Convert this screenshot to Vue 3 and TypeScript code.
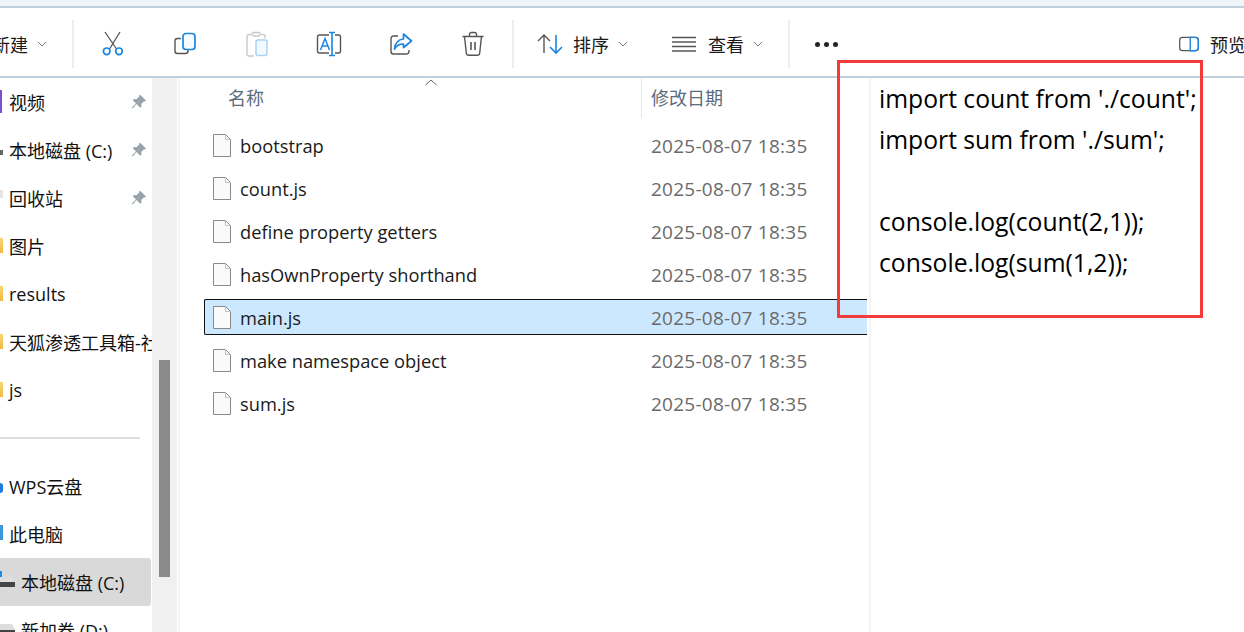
<script setup lang="ts">
const sideTop = [
  { name: '视频', pin: true, kind: 'video' },
  { name: '本地磁盘 (C:)', pin: true, kind: 'disk' },
  { name: '回收站', pin: true, kind: 'bin' },
  { name: '图片', pin: false, kind: 'folder' },
  { name: 'results', pin: false, kind: 'folder' },
  { name: '天狐渗透工具箱-社区版', pin: false, kind: 'folder' },
  { name: 'js', pin: false, kind: 'folder' },
]
const files = ['bootstrap', 'count.js', 'define property getters', 'hasOwnProperty shorthand', 'main.js', 'make namespace object', 'sum.js']
const code = ["import count from './count';", "import sum from './sum';", '', 'console.log(count(2,1));', 'console.log(sum(1,2));']
</script>

<template>
  <div class="window">
    <div class="topstrip"></div>
    <div class="toolbar">
      <div class="tb-new"><span class="tb-label">新建</span>
        <svg class="chev" width="10" height="6" viewBox="0 0 10 6"><path d="M1 1l4 4 4-4" fill="none" stroke="#777" stroke-width="1"/></svg>
      </div>
      <div class="sep first"></div>
      <div class="tb-btn">
        <svg width="26" height="26" viewBox="0 0 26 26" fill="none">
          <path d="M5 1L16.500 18M20 1L9.500 18" stroke="#555" stroke-width="1.300"/>
          <circle cx="6.700" cy="20.300" r="3.300" stroke="#1a86e0" stroke-width="1.700"/>
          <circle cx="19" cy="20.300" r="3.300" stroke="#1a86e0" stroke-width="1.700"/>
        </svg>
      </div>
      <div class="tb-btn">
        <svg width="26" height="26" viewBox="0 0 26 26" fill="none">
          <path d="M9 7.500H5.500a2.500 2.500 0 0 0-2.500 2.500v10a2.500 2.500 0 0 0 2.500 2.500h8a2.500 2.500 0 0 0 2.500-2.500v-1" stroke="#555" stroke-width="1.400"/>
          <rect x="11" y="2.500" width="12" height="16" rx="3" stroke="#1a86e0" stroke-width="1.700" fill="#f7fbff"/>
        </svg>
      </div>
      <div class="tb-btn">
        <svg width="26" height="26" viewBox="0 0 26 26" fill="none">
          <path d="M7 3.500H5a2 2 0 0 0-2 2V23a2 2 0 0 0 2 2h5M17 3.500h2a2 2 0 0 1 2 2v2" stroke="#c9c9c9" stroke-width="1.400"/>
          <rect x="8" y="1.500" width="8" height="3.500" rx="1.500" stroke="#c9c9c9" stroke-width="1.300"/>
          <rect x="12" y="9" width="11" height="15.500" rx="2" stroke="#a9d3f5" stroke-width="1.500" fill="#f4f9fe"/>
        </svg>
      </div>
      <div class="tb-btn">
        <svg width="26" height="26" viewBox="0 0 26 26" fill="none">
          <path d="M13 4H3.500a2 2 0 0 0-2 2v14a2 2 0 0 0 2 2H13M19 4h3.500a2 2 0 0 1 2 2v14a2 2 0 0 1-2 2H19" stroke="#555" stroke-width="1.400"/>
          <path d="M16 1.500v23M13 1.500h6M13 24.500h6" stroke="#1a86e0" stroke-width="1.600"/>
          <path d="M4.500 19L9 7.500 13.500 19M6 15h6" stroke="#1a86e0" stroke-width="1.500"/>
        </svg>
      </div>
      <div class="tb-btn">
        <svg width="26" height="26" viewBox="0 0 26 26" fill="none">
          <path d="M10 5H5.500a2.500 2.500 0 0 0-2.500 2.500v13a2.500 2.500 0 0 0 2.500 2.500h13a2.500 2.500 0 0 0 2.500-2.500v-1.500" stroke="#555" stroke-width="1.400"/>
          <path d="M15.500 3l8 7-8 6.500v-3.500c-4.500 0-7 1.500-9 5 .5-5.500 3.500-9.500 9-10z" stroke="#1a86e0" stroke-width="1.700" stroke-linejoin="round"/>
        </svg>
      </div>
      <div class="tb-btn">
        <svg width="26" height="26" viewBox="0 0 26 26" fill="none" stroke="#555" stroke-width="1.400">
          <path d="M2.500 5.500h21M9.500 5.500V3.500a2 2 0 0 1 2-2h3a2 2 0 0 1 2 2v2"/>
          <path d="M4.500 5.500L6.300 22a2.500 2.500 0 0 0 2.500 2.300h8.400a2.500 2.500 0 0 0 2.500-2.300l1.800-16.500"/>
          <path d="M11 11v8M15 11v8" stroke-width="1.600"/>
        </svg>
      </div>
      <div class="sep second"></div>
      <div class="tb-text sort">
        <svg width="28" height="24" viewBox="0 0 28 24" fill="none">
          <path d="M8 21V3M2 9l6-6 6 6" stroke="#555" stroke-width="1.400"/>
          <path d="M20 3v18M14 15l6 6 6-6" stroke="#1a86e0" stroke-width="1.600"/>
        </svg>
        <span class="tb-label">排序</span>
        <svg class="chev" width="10" height="6" viewBox="0 0 10 6"><path d="M1 1l4 4 4-4" fill="none" stroke="#777" stroke-width="1"/></svg>
      </div>
      <div class="tb-text view">
        <svg width="24" height="16" viewBox="0 0 24 16" fill="none" stroke="#555" stroke-width="1.300">
          <path d="M0 1.500h24M0 6h24M0 10.500h24M0 15h24"/>
        </svg>
        <span class="tb-label">查看</span>
        <svg class="chev" width="10" height="6" viewBox="0 0 10 6"><path d="M1 1l4 4 4-4" fill="none" stroke="#777" stroke-width="1"/></svg>
      </div>
      <div class="sep"></div>
      <div class="dots"><i></i><i></i><i></i></div>
      <div class="tb-preview">
        <svg width="24" height="18" viewBox="0 0 24 18" fill="none">
          <rect x=".8" y="1" width="22.400" height="16" rx="3.500" stroke="#555" stroke-width="1.500"/>
          <path d="M13.500 1h6.200a3.500 3.500 0 0 1 3.500 3.500v9a3.500 3.500 0 0 1-3.500 3.500H13.500z" stroke="#1a86e0" stroke-width="1.700"/>
        </svg>
        <span class="tb-label">预览</span>
      </div>
    </div>

    <div class="body">
      <aside class="side">
        <div class="side-list">
          <div v-for="s in sideTop" :key="s.name" class="side-row">
            <i class="mark" :class="s.kind"></i>
            <span class="side-name">{{ s.name }}</span>
            <svg v-if="s.pin" class="pin" width="16" height="16" viewBox="0 0 16 16">
              <path d="M9.500 1l5.500 5.500-1 1-1-.2-2.700 2.700.2 2.500-1.200 1.200L5.500 10 2 14l-1 .2L1.200 13 5 9.500 1.800 6.200 3 5l2.500.2L8.200 2.500 8 1.500z" fill="#98a2aa"/>
            </svg>
          </div>
          <div class="side-div"></div>
          <div class="side-row"><i class="mark cloud"></i><span class="side-name">WPS云盘</span></div>
          <div class="side-row"><i class="mark pc"></i><span class="side-name">此电脑</span></div>
          <div class="side-row active"><i class="drive"></i><span class="side-name">本地磁盘 (C:)</span></div>
          <div class="side-row sub"><i class="drive plain"></i><span class="side-name">新加卷 (D:)</span></div>
        </div>
        <div class="scroll"><div class="thumb"></div></div>
      </aside>

      <main class="content">
        <div class="head">
          <svg class="sort-caret" width="14" height="7" viewBox="0 0 14 7"><path d="M1.500 6L7 1l5.500 5" fill="none" stroke="#666" stroke-width="1"/></svg>
          <div class="col-name">名称</div>
          <div class="col-date">修改日期</div>
        </div>
        <div class="rows">
          <div v-for="f in files" :key="f" class="row" :class="{ sel: f === 'main.js' }">
            <svg class="file" width="18" height="23" viewBox="0 0 18 23">
              <path d="M.5.500h12l5 5v17H.500z" fill="#fafafa" stroke="#8a8a8a"/>
              <path d="M12.500.500v5h5" fill="none" stroke="#c4c4c4"/>
            </svg>
            <span class="fname">{{ f }}</span>
            <span class="fdate">2025-08-07 18:35</span>
          </div>
        </div>
      </main>

      <section class="preview">
        <div v-for="(l, i) in code" :key="i" class="code">{{ l }}</div>
      </section>
    </div>
    <div class="redbox"></div>
  </div>
</template>

<style>
html, body { margin: 0; background: #fff; overflow: hidden; }
</style>

<style scoped>
.window {
  position: relative;
  width: 1244px;
  height: 632px;
  overflow: hidden;
  background: #fff;
  display: flex;
  flex-direction: column;
  font-family: "Open Sans", "Noto Sans", "Noto Sans CJK SC", sans-serif;
  color: #111;
}
.topstrip { height: 6px; background: #eff4f9; border-bottom: 2px solid #c0cfdc; flex: none; }
.toolbar {
  height: 64px;
  padding-top: 4px;
  flex: none;
  display: flex;
  align-items: center;
  border-bottom: 2px solid #c0cfdc;
  box-sizing: content-box;
}
.tb-label { font-size: 18px; white-space: nowrap; color: #1a1a1a; }
.tb-new { width: 79px; margin-left: -8px; display: flex; align-items: center; flex: none; }
.tb-new .chev { margin-left: 9px; }
.sep { width: 2px; height: 48px; background: #eceded; margin: 0 3px 0 1px; flex: none; }
.sep.first { margin-right: 3px; }
.sep.second { margin-left: 3px; }
.tb-btn { width: 72px; height: 100%; display: flex; align-items: center; justify-content: center; flex: none; }
.tb-text { display: flex; align-items: center; flex: none; }
.sort { width: 130px; padding-left: 19px; box-sizing: border-box; gap: 9px; }
.view { width: 140px; padding-left: 25px; box-sizing: border-box; gap: 12px; }
.view .chev { margin-left: -3px; }
.dots { display: flex; gap: 4px; margin-left: 22px; }
.dots i { width: 5px; height: 5px; border-radius: 50%; background: #222; display: block; }
.tb-preview { margin-left: auto; margin-right: -2px; display: flex; align-items: center; gap: 11px; width: 67px; flex: none; }
.body { flex: 1; display: flex; min-height: 0; }
.side { width: 178px; flex: none; display: flex; border-right: 2px solid #f4f4f4; }
.side-list { width: 152px; flex: none; overflow: hidden; }
.side-row { height: 48px; display: flex; align-items: center; padding: 0 0 0 9px; box-sizing: border-box; position: relative; font-size: 18px; white-space: nowrap; overflow: hidden; }
.side-name { flex: none; }
.side-row.active { background: #d9d9d9; border-radius: 0 3px 3px 0; width: 151px; padding-left: 21px; }
.side-row.sub { padding-left: 21px; }
.side-div { height: 2px; background: #dedede; width: 140px; margin: 23px 0; }
.pin { position: absolute; left: 131px; top: 16px; }
.mark { position: absolute; left: 0; width: 3px; height: 15px; top: 16px; }
.mark.video { background: #7a4fd0; width: 2px; height: 23px; top: 12px; }
.mark.disk { background: #666; height: 5px; top: 24px; }
.mark.bin { background: #e4e4e4; height: 8px; top: 16px; }
.mark.folder { background: linear-gradient(#f8d775, #f0b840); }
.mark.cloud { background: #1f7ae0; border-radius: 0 6px 6px 0; height: 10px; top: 21px; }
.mark.pc { background: #3a9ad9; top: 15px; }
.drive { position: absolute; left: 0; top: 18px; width: 15px; height: 11px; background: linear-gradient(#ddd 0 55%, #444 55%); clip-path: polygon(0 -60%, 20% -60%, 20% 0, 80% 0, 100% 55%, 100% 100%, 0 100%); }
.drive::before { content: ""; position: absolute; left: 0; top: -5px; width: 2px; height: 6px; background: #1f88e5; }
.drive.plain::before { display: none; }
.scroll { width: 25px; flex: none; background: #f0f0f0; position: relative; }
.thumb { position: absolute; left: 7px; width: 11px; top: 282px; height: 217px; background: #8a8a8a; }
.content { width: 687px; flex: none; position: relative; }
.head { height: 43px; display: flex; align-items: flex-start; font-size: 18px; color: #5a6b7c; position: relative; }
.sort-caret { position: absolute; left: 244px; top: 1px; }
.col-name { width: 461px; padding-left: 48px; box-sizing: border-box; line-height: 41px; }
.col-date { padding-left: 9px; height: 40px; line-height: 41px; border-left: 1px solid #e6e6e6; }
.rows { display: flex; flex-direction: column; padding-top: 4px; }
.row {
  height: 43px;
  display: flex;
  align-items: center;
  padding: 0 0 2px 33px;
  font-size: 18.300px;
  box-sizing: border-box;
  flex: none;
  position: relative;
}
.row.sel::before {
  content: "";
  position: absolute;
  left: 24px; right: 0; top: 2px; height: 36px;
  background: #cce8ff;
  border: 1px solid #111;
  border-right: none;
  border-radius: 2px 0 0 2px;
  box-sizing: border-box;
}
.file { flex: none; position: relative; }
.fname { width: 411px; margin-left: 9px; position: relative; color: #1a1a1a; }
.fdate { position: relative; color: #6a6a6a; font-size: 19px; letter-spacing: .25px; }
.preview { flex: 1; margin-left: 2px; border-left: 2px solid #f4f4f4; padding: 0 0 0 8px; }
.code { height: 41px; line-height: 41px; font-size: 24.700px; color: #000; white-space: nowrap; }
.redbox {
  position: absolute;
  left: 837px; top: 60px;
  width: 366px; height: 258px;
  box-sizing: border-box;
  border: 3px solid #f53a3a;
  pointer-events: none;
}
</style>
